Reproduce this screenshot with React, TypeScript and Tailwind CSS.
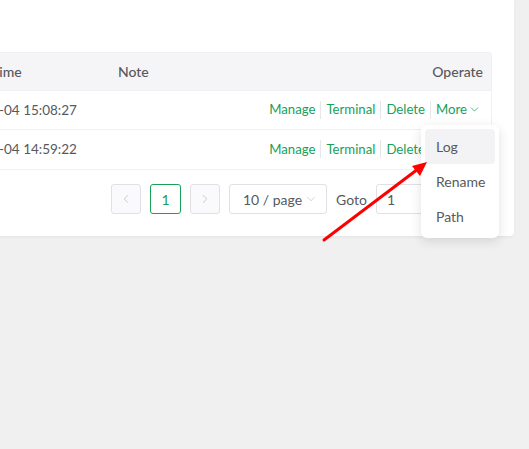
import { ChevronDown, ChevronLeft, ChevronRight } from 'lucide-react';

const rows = [
    { time: '2023-07-04 15:08:27', note: '' },
    { time: '2023-07-04 14:59:22', note: '' },
];

function OpLinks({ last }: { last: string }) {
    return (
        <div className="flex items-center justify-end text-[13.2px] text-[#18a058]">
            <span>Manage</span>
            <span className="mx-[5px] h-[18px] w-px bg-[#e6e6ec]" />
            <span>Terminal</span>
            <span className="mx-[5px] h-[18px] w-px bg-[#e6e6ec]" />
            <span>Delete</span>
            <span className="mx-[5px] h-[18px] w-px bg-[#e6e6ec]" />
            <span className="flex items-center">
                {last}
                <ChevronDown size={13} strokeWidth={1.4} className="ml-px" />
            </span>
        </div>
    );
}

export default function App() {
    return (
        <div
            className="relative h-[449px] w-[529px] overflow-hidden bg-[#f0f0f0] text-[13.5px] text-[#56595e]"
            style={{ fontFamily: 'Lato, "Liberation Sans", sans-serif' }}
        >
            {/* white content panel */}
            <div className="h-[236px] w-[514px] overflow-hidden rounded-br-[4px] bg-white pt-[52px] pr-[22px] shadow-[0_1px_3px_rgba(0,0,0,0.06)]">
                <div className="ml-[-70px] rounded-r-[3px] border border-[#efeff5]">
                    <div className="grid h-[38px] grid-cols-[175px_1fr_auto] items-center border-b border-[#efeff5] bg-[#f5f5f7] text-[14px] font-medium">
                        <div className="pr-3 pl-[16px] whitespace-nowrap">Create Time</div>
                        <div className="px-3">Note</div>
                        <div className="pr-[8px] pl-3">Operate</div>
                    </div>
                    {rows.map((r, i) => (
                        <div
                            key={r.time}
                            className={
                                'grid h-[39px] grid-cols-[175px_1fr_auto] items-center ' +
                                (i === 0 ? 'border-b border-[#efeff5]' : '')
                            }
                        >
                            <div className="pr-3 pl-[16px] whitespace-nowrap">{r.time}</div>
                            <div className="px-3">{r.note}</div>
                            <div className="pr-[10px] pl-3">
                                <OpLinks last="More" />
                            </div>
                        </div>
                    ))}
                </div>

                {/* pagination */}
                <div className="mt-[14px] ml-[111px] flex items-center gap-[9px] whitespace-nowrap text-[14px]">
                    <div className="flex h-[30px] w-[30px] items-center justify-center rounded-[3px] border border-[#e0e0e6] bg-[#fafafc] text-[#c2c2c6]">
                        <ChevronLeft size={14} strokeWidth={1.5} />
                    </div>
                    <div className="flex h-[30px] w-[31px] items-center justify-center rounded-[3px] border border-[#18a058] text-[#18a058]">
                        1
                    </div>
                    <div className="flex h-[30px] w-[30px] items-center justify-center rounded-[3px] border border-[#e0e0e6] bg-[#fafafc] text-[#c2c2c6]">
                        <ChevronRight size={14} strokeWidth={1.5} />
                    </div>
                    <div className="flex h-[30px] w-[98px] shrink-0 items-center justify-between rounded-[3px] border border-[#e0e0e6] pr-[8px] pl-[13px]">
                        <span>10 / page</span>
                        <ChevronDown size={14} strokeWidth={1.2} className="text-[#c2c2c6]" />
                    </div>
                    <span>Goto</span>
                    <div className="flex h-[30px] w-[104px] shrink-0 items-center rounded-[3px] border border-[#e0e0e6] pl-[10px]">
                        1
                    </div>
                </div>
            </div>

            {/* dropdown menu */}
            <div className="absolute top-[125px] left-[421px] w-[78px] rounded-[6px] bg-white p-[4px] text-[14px] shadow-[0_3px_12px_rgba(0,0,0,0.12)]">
                <div className="flex h-[35px] items-center rounded-[4px] bg-[#f3f3f5] px-[11px]">Log</div>
                <div className="flex h-[35px] items-center px-[11px]">Rename</div>
                <div className="flex h-[35px] items-center px-[11px]">Path</div>
            </div>

            {/* annotation arrow */}
            <svg className="pointer-events-none absolute top-0 left-0" width="529" height="449">
                <line x1="324" y1="240" x2="418" y2="169" stroke="#ff0000" strokeWidth="3" strokeLinecap="round" />
                <polygon points="427,162 412,166 420,176" fill="#ff0000" />
            </svg>
        </div>
    );
}
